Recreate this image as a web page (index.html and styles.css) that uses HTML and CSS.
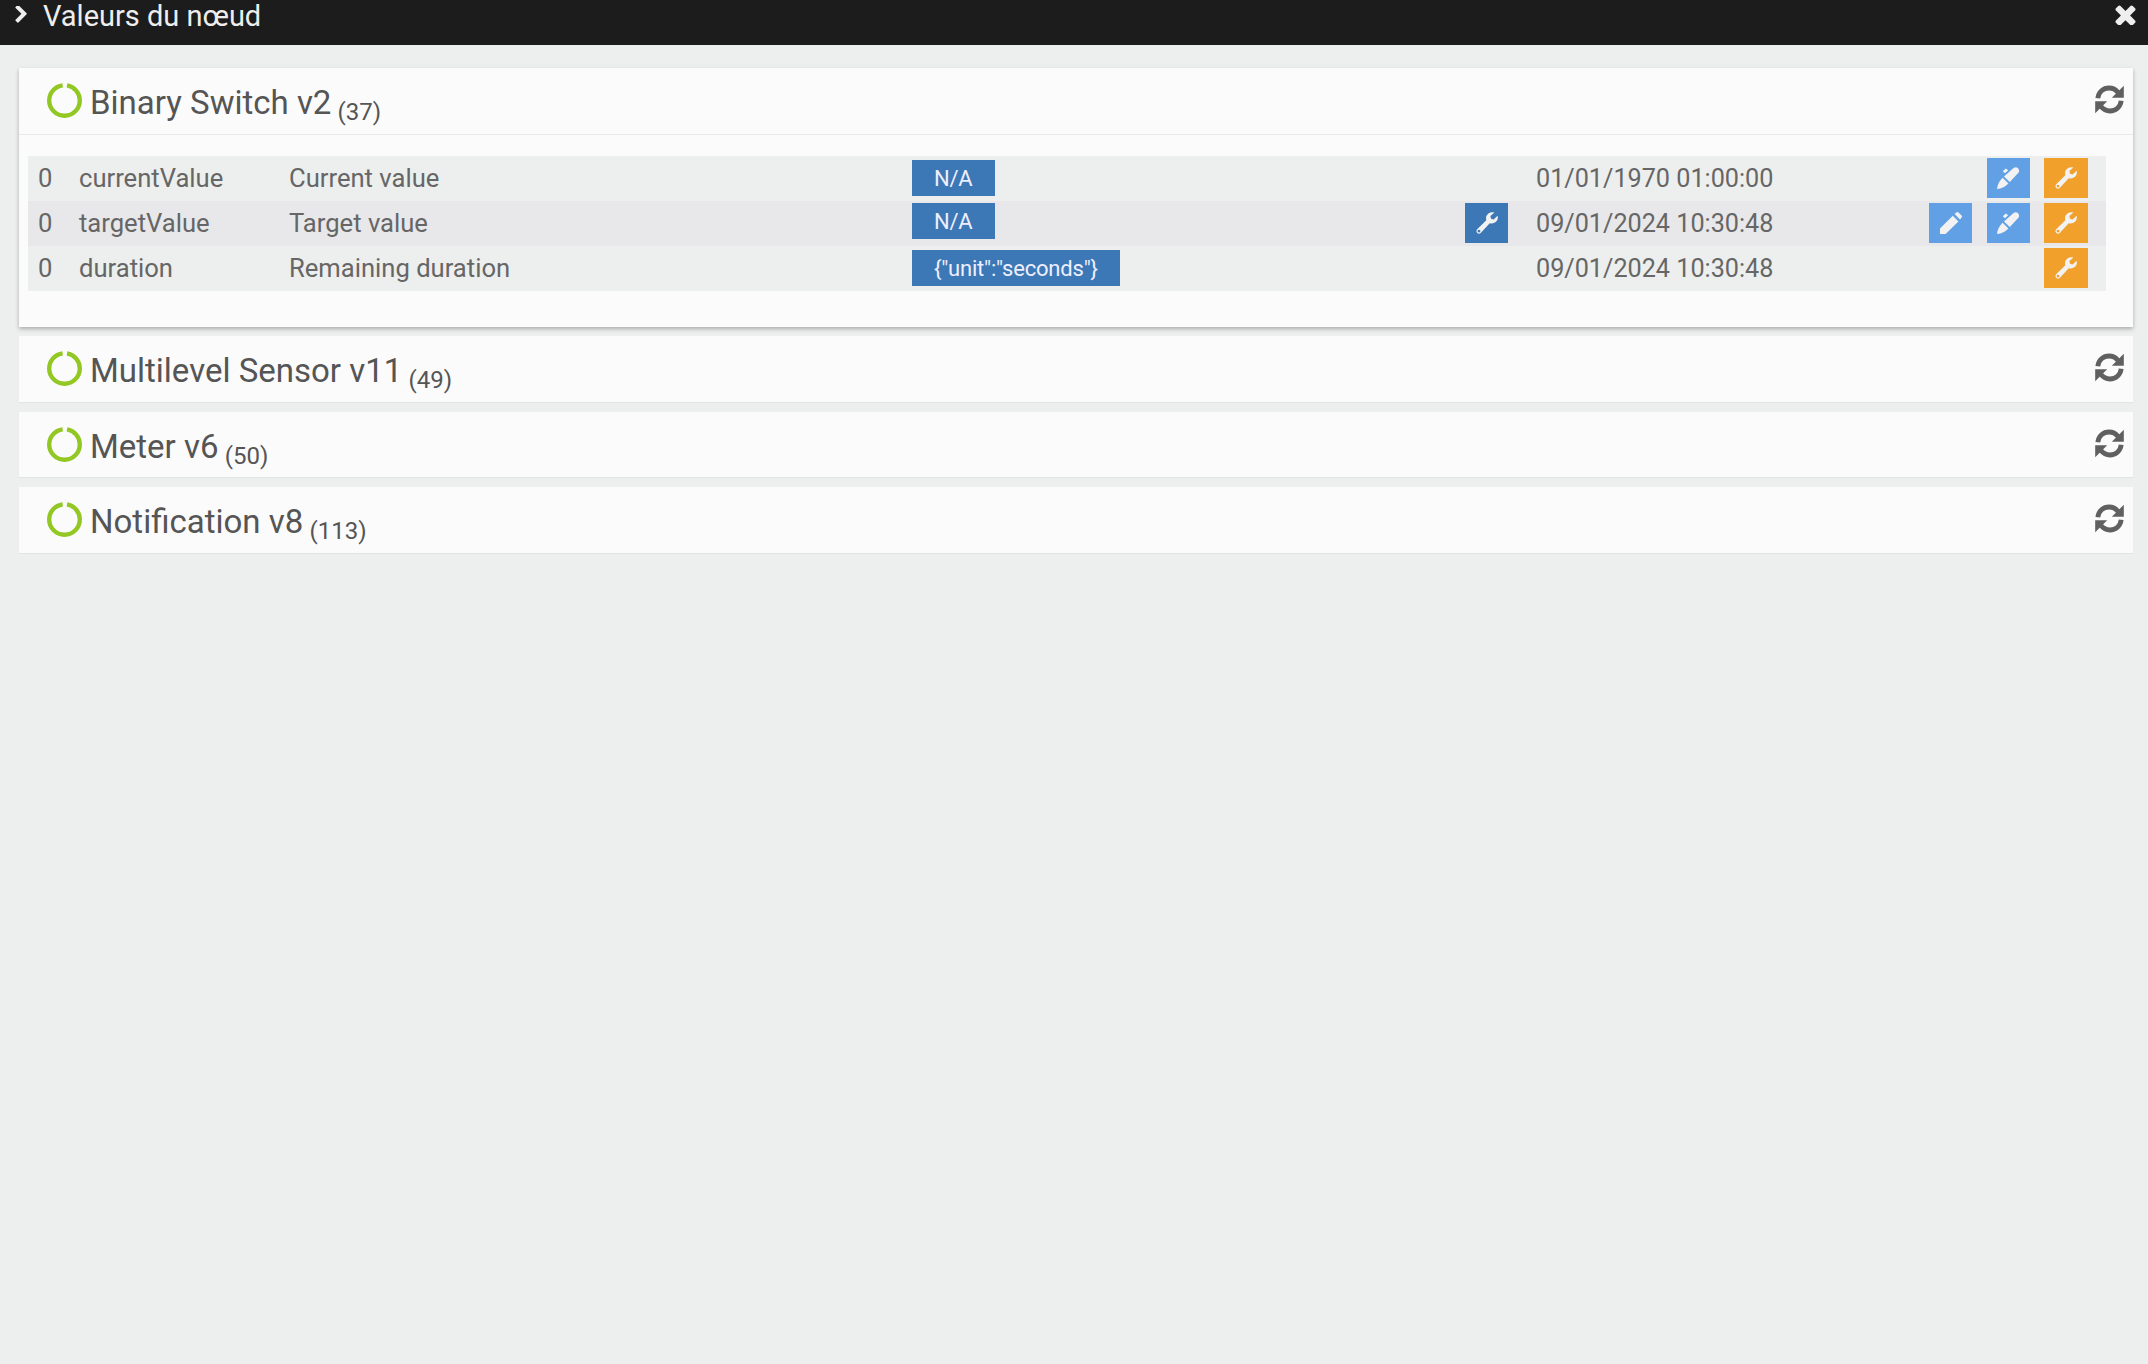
FILE: index.html
```html
<!DOCTYPE html>
<html lang="fr">
<head>
<meta charset="utf-8">
<title>Valeurs du nœud</title>
<link rel="stylesheet" href="styles.css">
</head>
<body>
<svg class="defs" width="0" height="0" aria-hidden="true">
  <defs>
    <symbol id="i-wrench" viewBox="0 0 22 22"><path fill-rule="evenodd" d="M1.200 17.300L10.300 8.300Q9.300 4 12.400 1.600 15 -.4 18.400 .4L14.400 3.900 15 6.700 17.700 7.400 21.500 3.800Q22.700 7.200 20 9.800 17.300 12.300 13.700 11.300L4.700 20.900Q3 22.400 1.300 20.900-.4 19.200 1.200 17.300ZM3 17.700a1.400 1.400 0 1 0 .01 0Z"/></symbol>
    <symbol id="i-pencil" viewBox="0 0 22 22"><path d="M0 16.500L12.800 3.800 18.400 9.400 5.600 22H0z"/><path d="M14.600 2L16.400.4q1-.8 2 0l3.200 3.200q.8 1 0 2L20 7.400z"/></symbol>
    <symbol id="i-pen" viewBox="0 0 22 22"><path d="M0 22q.8-6.600 5.600-11.200L11.400 16.400Q7 21 0 22z"/><path d="M7 9.400L16.600 1q2.200-1.600 4.200 0 2.200 2.400.6 4.800L12.800 15z"/><path d="M5.800 4.200L8.800 1.400l2.400 1.800-3.200 3z"/></symbol>
    <symbol id="i-sync" viewBox="0 0 29 29"><path d="M2.800 13.200C3.600 7 8.200 3 14 3c3.600 0 6.800 1.600 9 4.400" fill="none" stroke="currentColor" stroke-width="4.800"/><path d="M28.800 .8V12.800H16.800z" fill="currentColor"/><path d="M26.200 15.800C25.400 22 20.800 26 15 26c-3.600 0-6.800-1.600-9-4.400" fill="none" stroke="currentColor" stroke-width="4.800"/><path d="M.2 28.200V16.200H12.200z" fill="currentColor"/></symbol>
    <symbol id="i-ring" viewBox="0 0 35 35"><circle cx="17.500" cy="17.500" r="15.300" fill="none" stroke="currentColor" stroke-width="4.400" stroke-dasharray="91 5.100" stroke-dashoffset="-2.600" transform="rotate(-90 17.500 17.500)"/></symbol>
  </defs>
</svg>

<header class="topbar">
  <svg class="top-chevron" viewBox="400 128 1000 1536"><path d="M1363 877l-742 742q-19 19-45 19t-45-19l-166-166q-19-19-19-45t19-45l531-531-531-531q-19-19-19-45t19-45l166-166q19-19 45-19t45 19l742 742q19 19 19 45t-19 45z"/></svg>
  <span class="top-title">Valeurs du nœud</span>
  <svg class="top-close" viewBox="274 274 1244 1244"><path d="M1490 1322q0 40-28 68l-136 136q-28 28-68 28t-68-28l-294-294-294 294q-28 28-68 28t-68-28l-136-136q-28-28-28-68t28-68l294-294-294-294q-28-28-28-68t28-68l136-136q28-28 68-28t68 28l294 294 294-294q28-28 68-28t68 28l136 136q28 28 28 68t-28 68l-294 294 294 294q28 28 28 68z"/></svg>
</header>

<main class="panels">
  <section class="panel panel-open">
    <div class="panel-head">
      <svg class="ring"><use href="#i-ring"/></svg>
      <h2 class="panel-title">Binary Switch v2 <small class="panel-count">(37)</small></h2>
      <svg class="sync"><use href="#i-sync"/></svg>
    </div>
    <div class="panel-body">
      <div class="row">
        <span>0</span><span>currentValue</span><span>Current value</span>
        <div class="val-cell"><span class="badge">N/A</span></div>
        <span class="date">01/01/1970 01:00:00</span>
        <div class="actions">
          <button class="btn btn-light"><svg class="ico"><use href="#i-pen"/></svg></button>
          <button class="btn btn-orange"><svg class="ico"><use href="#i-wrench"/></svg></button>
        </div>
      </div>
      <div class="row row-alt">
        <span>0</span><span>targetValue</span><span>Target value</span>
        <div class="val-cell val-cell-top"><span class="badge">N/A</span><button class="btn btn-blue"><svg class="ico"><use href="#i-wrench"/></svg></button></div>
        <span class="date">09/01/2024 10:30:48</span>
        <div class="actions">
          <button class="btn btn-light"><svg class="ico"><use href="#i-pencil"/></svg></button>
          <button class="btn btn-light"><svg class="ico"><use href="#i-pen"/></svg></button>
          <button class="btn btn-orange"><svg class="ico"><use href="#i-wrench"/></svg></button>
        </div>
      </div>
      <div class="row">
        <span>0</span><span>duration</span><span>Remaining duration</span>
        <div class="val-cell"><span class="badge">{"unit":"seconds"}</span></div>
        <span class="date">09/01/2024 10:30:48</span>
        <div class="actions">
          <button class="btn btn-orange"><svg class="ico"><use href="#i-wrench"/></svg></button>
        </div>
      </div>
    </div>
  </section>

  <section class="panel">
    <div class="panel-head">
      <svg class="ring"><use href="#i-ring"/></svg>
      <h2 class="panel-title">Multilevel Sensor v11 <small class="panel-count">(49)</small></h2>
      <svg class="sync"><use href="#i-sync"/></svg>
    </div>
  </section>
  <section class="panel">
    <div class="panel-head">
      <svg class="ring"><use href="#i-ring"/></svg>
      <h2 class="panel-title">Meter v6 <small class="panel-count">(50)</small></h2>
      <svg class="sync"><use href="#i-sync"/></svg>
    </div>
  </section>
  <section class="panel">
    <div class="panel-head">
      <svg class="ring"><use href="#i-ring"/></svg>
      <h2 class="panel-title">Notification v8 <small class="panel-count">(113)</small></h2>
      <svg class="sync"><use href="#i-sync"/></svg>
    </div>
  </section>
</main>
</body>
</html>
```

FILE: styles.css
```css
* { box-sizing: border-box; }

html, body {
  margin: 0;
  height: 100%;
}

body {
  background: #edefee;
  color: #666;
  font-family: Roboto, "Liberation Sans", sans-serif;
  overflow: hidden;
}

.defs { display: block; height: 0; }

.topbar {
  height: 45px;
  background: #1c1c1c;
  color: #eee;
  display: flex;
  align-items: flex-start;
  padding: 0 12px 0 15px;
}

.topbar svg { fill: #eee; flex: none; }

.top-chevron {
  width: 13px;
  height: 17px;
  margin-top: 6px;
}

.top-title {
  margin-left: 15px;
  font-size: 29px;
  line-height: 32px;
  flex: 1;
}

.top-close {
  width: 21px;
  height: 21px;
  margin-top: 4px;
}

.panels {
  padding: 23px 15px 0 19px;
}

.panel {
  background: #fbfbfb;
  margin-bottom: 10px;
  box-shadow: 0 1px 1px rgba(0, 0, 0, .04);
}

.panel-open {
  margin-bottom: 9px;
  box-shadow: 0 2px 4px rgba(0, 0, 0, .28);
}

.panel-head {
  height: 65.5px;
  padding: 15px 9px 0 28px;
  display: flex;
  align-items: flex-start;
}

.panel-open .panel-head {
  height: 67px;
  border-bottom: 1px solid #e9e9e9;
}

.ring {
  width: 35px;
  height: 35px;
  color: #93c723;
  flex: none;
}

.panel-title {
  flex: 1;
  margin: 0 0 0 8px;
  font-weight: 400;
  font-size: 33px;
  line-height: 40px;
  color: #555;
}

.panel-count {
  font-size: 24px;
  position: relative;
  top: 6px;
  margin-left: -2px;
}

.sync {
  width: 29px;
  height: 29px;
  color: #606060;
  flex: none;
  margin-top: 2px;
}

.panel-body {
  padding: 21px 27px 36px 9px;
}

.row {
  display: grid;
  grid-template-columns: 41px 210px 623px 596px 1fr auto;
  height: 45px;
  padding-left: 10px;
  background: #edefee;
  font-size: 25.600px;
  line-height: 45px;
}

.row-alt { background: #e8e8ea; }

.val-cell {
  display: flex;
  justify-content: space-between;
  align-items: flex-start;
  padding-top: 4px;
}

.val-cell-top { padding-top: 2px; }

.badge {
  display: block;
  height: 36px;
  padding: 0 22px;
  background: #3c78b5;
  color: #eef;
  font-size: 22px;
  line-height: 38px;
  letter-spacing: -.2px;
}

.date {
  padding-left: 28px;
  font-size: 25.200px;
}

.actions {
  display: flex;
  justify-content: flex-end;
  align-items: flex-start;
  gap: 14.500px;
  padding: 2px 18px 0 0;
}

.btn {
  width: 43px;
  height: 40px;
  padding: 0;
  border: 0;
  display: flex;
  align-items: center;
  justify-content: center;
  fill: #f2f2f2;
}

.btn-light { background: #62a0e5; }
.btn-orange { background: #f0a02b; width: 44px; }
.btn-blue { background: #3c78b5; }

.ico {
  width: 22px;
  height: 22px;
}
```
